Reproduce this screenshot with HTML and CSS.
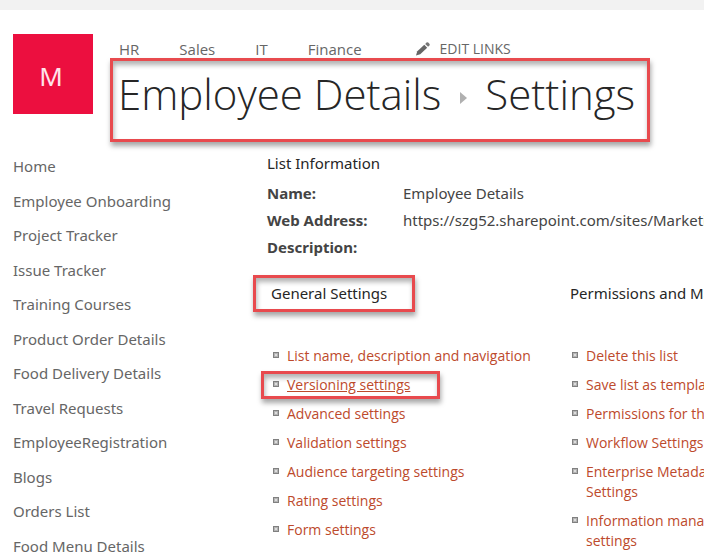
FILE: index.html
```html
<!DOCTYPE html>
<html lang="en">
<head>
<meta charset="utf-8">
<title>Employee Details - Settings</title>
<link rel="stylesheet" href="styles.css">
</head>
<body>
<div class="suite-bar"></div>
<header class="header">
  <a class="logo" href="#">M</a>
  <div class="heading">
    <nav class="top-nav">
      <a href="#">HR</a>
      <a href="#">Sales</a>
      <a href="#">IT</a>
      <a href="#">Finance</a>
      <button class="edit-links" type="button">
        <svg width="14" height="14" viewBox="0 0 14 14" aria-hidden="true">
          <path fill="#666" d="M0 13.500 1.300 9.300 8.300 2.800 11.200 5.700 4.200 12.200Z"/>
          <path fill="#777" d="M9.200 1.900 10.500.6Q11.300-.1 12.200.6L13.400 1.800Q14.100 2.600 13.400 3.500L12.100 4.800Z"/>
        </svg>
        EDIT LINKS
      </button>
    </nav>
    <h1 class="title marked">
      <a href="#">Employee Details</a>
      <svg class="arrow" width="7" height="12" viewBox="0 0 7 12" aria-hidden="true"><path fill="#b0b0b0" d="M0 0 7 6 0 12Z"/></svg>
      <span>Settings</span>
    </h1>
  </div>
</header>
<div class="body">
  <nav class="side-nav">
    <ul>
      <li><a href="#">Home</a></li>
      <li><a href="#">Employee Onboarding</a></li>
      <li><a href="#">Project Tracker</a></li>
      <li><a href="#">Issue Tracker</a></li>
      <li><a href="#">Training Courses</a></li>
      <li><a href="#">Product Order Details</a></li>
      <li><a href="#">Food Delivery Details</a></li>
      <li><a href="#">Travel Requests</a></li>
      <li><a href="#">EmployeeRegistration</a></li>
      <li><a href="#">Blogs</a></li>
      <li><a href="#">Orders List</a></li>
      <li><a href="#">Food Menu Details</a></li>
    </ul>
  </nav>
  <main class="main">
    <h2 class="section-title">List Information</h2>
    <table class="info">
      <tr><th scope="row">Name:</th><td>Employee Details</td></tr>
      <tr><th scope="row">Web Address:</th><td>https://szg52.sharepoint.com/sites/Marketing</td></tr>
      <tr><th scope="row">Description:</th><td></td></tr>
    </table>
    <div class="columns">
      <section>
        <h2 class="column-title"><span class="marked">General Settings</span></h2>
        <ul class="links">
          <li><a href="#">List name, description and navigation</a></li>
          <li class="current"><a href="#">Versioning settings</a></li>
          <li><a href="#">Advanced settings</a></li>
          <li><a href="#">Validation settings</a></li>
          <li><a href="#">Audience targeting settings</a></li>
          <li><a href="#">Rating settings</a></li>
          <li><a href="#">Form settings</a></li>
        </ul>
      </section>
      <section>
        <h2 class="column-title"><span>Permissions and Management</span></h2>
        <ul class="links">
          <li><a href="#">Delete this list</a></li>
          <li><a href="#">Save list as template</a></li>
          <li><a href="#">Permissions for this list</a></li>
          <li><a href="#">Workflow Settings</a></li>
          <li><a href="#">Enterprise Metadata and Keywords Settings</a></li>
          <li><a href="#">Information management policy settings</a></li>
        </ul>
      </section>
    </div>
  </main>
</div>
</body>
</html>
```
FILE: styles.css
```css
*,
*::before,
*::after {
  box-sizing: border-box;
}

body {
  margin: 0;
  height: 100vh;
  overflow: hidden;
  background: #fff;
  color: #444;
  font: 15px/20px "Noto Sans", "Open Sans", sans-serif;
}

a {
  color: inherit;
  text-decoration: none;
}

ul {
  list-style: none;
  margin: 0;
  padding: 0;
}

h1,
h2 {
  margin: 0;
  font-weight: 400;
}

.suite-bar {
  height: 10px;
  background: #f2f2f2;
}

.header {
  display: flex;
  gap: 17px;
  padding: 24px 13px 0;
}

.logo {
  display: flex;
  flex: none;
  align-items: center;
  justify-content: center;
  width: 80px;
  height: 80px;
  padding: 4px 4px 0 0;
  background: #ec0f3f;
  color: #ffe3ea;
  font-size: 26px;
}

.top-nav {
  display: flex;
  align-items: center;
  gap: 40px;
  height: 24px;
  padding: 6px 0 0 9px;
  color: #666;
  font-family: "Open Sans", sans-serif;
  white-space: nowrap;
}

.edit-links {
  display: flex;
  align-items: center;
  gap: 10px;
  margin-left: 14px;
  padding: 0;
  border: 0;
  background: none;
  color: inherit;
  font: inherit;
  font-size: 14px;
}

/* Red frame with a soft shadow on both sides of the line */
.marked,
.current::after {
  border: 3px solid #e84a4e;
  box-shadow: 1px 4px 5px rgba(0, 0, 0, 0.35), inset 1px 4px 5px rgba(0, 0, 0, 0.3);
}

.title {
  display: flex;
  align-items: center;
  width: fit-content;
  height: 84px;
  padding: 0 12px 12px 5px;
  color: #262626;
  font-family: "Open Sans", sans-serif;
  font-size: 42px;
  font-weight: 300;
  line-height: 60px;
  white-space: nowrap;
}

.arrow {
  margin: 7px 18px 0 19px;
}

.body {
  display: flex;
  padding: 11px 0 0 13px;
}

.side-nav {
  flex: none;
  width: 254px;
  padding-top: 3px;
  color: #666;
}

.side-nav li {
  margin-bottom: 15px;
}

.side-nav li:nth-child(even) {
  margin-bottom: 14px;
}

.main {
  flex: 1;
}

.section-title,
.column-title {
  color: #262626;
  font-size: 15px;
  line-height: 20px;
}

.info {
  margin-top: 6px;
  border-collapse: collapse;
  white-space: nowrap;
}

.info th,
.info td {
  height: 27px;
  padding: 0;
  text-align: left;
}

.info th {
  width: 136px;
}

.columns {
  display: grid;
  grid-template-columns: 285px 260px;
  gap: 14px;
  margin-top: 15px;
  padding-left: 4px;
}

.column-title {
  height: 37px;
  white-space: nowrap;
}

.column-title span {
  display: block;
  width: fit-content;
  padding: 8px 0;
}

.column-title .marked {
  margin-left: -18px;
  padding: 5px 25px 6px 15px;
}

.links {
  display: flex;
  flex-direction: column;
  gap: 9px;
  margin-top: 34px;
  padding-left: 2px;
  color: #bd4a2c;
  font-family: "Open Sans", sans-serif;
  font-size: 14px;
}

.links li {
  position: relative;
  display: flex;
  gap: 8px;
}

.links li::before {
  content: "";
  flex: none;
  width: 6px;
  height: 6px;
  margin-top: 6px;
  border: 1px solid #808080;
  background: #ddd;
  box-shadow: inset 0 0 0 1px #b4b4b4;
}

.current a {
  text-decoration: underline;
}

.current::after {
  content: "";
  position: absolute;
  top: -4px;
  left: -12px;
  width: 179px;
  height: 28px;
  pointer-events: none;
}
```
